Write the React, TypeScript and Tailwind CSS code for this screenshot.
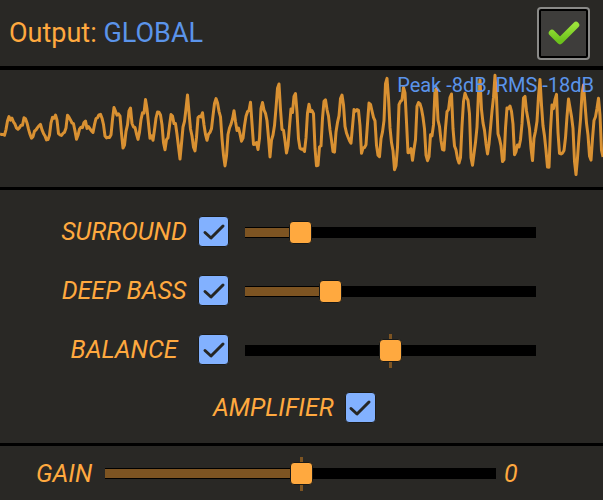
import React from "react";

function makeWave(): string {
  let s = 98765;
  const rnd = () => {
    s = (s * 1103515245 + 12345) % 2147483648;
    return s / 2147483648;
  };
  const pts: string[] = [];
  let phase = 0;
  let cycle = 0;
  let amp = 1;
  let offs = 0;
  const center = 57;
  for (let x = 0; x <= 604; x += 1.5) {
    const t = x / 603;
    const env = 12 + 30 * Math.min(1, Math.max(0, (t - 0.08) / 0.55));
    phase += 0.42 + rnd() * 0.4;
    const c = Math.floor(phase / Math.PI);
    if (c !== cycle) {
      cycle = c;
      amp = 0.55 + rnd() * 0.7;
      offs = (rnd() - 0.5) * 8;
    }
    const v = 0.8 * Math.sin(phase) + 0.2 * Math.sin(phase * 2.7 + 1) + (rnd() - 0.5) * 0.25;
    const y = center + offs + env * amp * v;
    pts.push(`${x.toFixed(1)},${y.toFixed(1)}`);
  }
  return pts.join(" ");
}

const WAVE = makeWave();

function Check() {
  return (
    <div className="w-[31px] h-[31px] rounded-[4px] bg-[#82b1ff] border border-[#1c1c1a] flex items-center justify-center shrink-0">
      <svg width="24" height="24" viewBox="0 0 24 24">
        <polyline points="3,12.5 9,18 21,6" fill="none" stroke="#262624" strokeWidth="3" strokeLinecap="round" strokeLinejoin="round" />
      </svg>
    </div>
  );
}

function Slider({ width, thumbLeft, fill, tick }: { width: number; thumbLeft: number; fill: boolean; tick: boolean }) {
  return (
    <div className="relative h-[24px] shrink-0" style={{ width }}>
      <div className="absolute left-0 right-0 top-[6px] h-[11px] bg-black" />
      {fill && <div className="absolute left-0 top-[7px] h-[9px] bg-[#7d5422]" style={{ width: thumbLeft + 11 }} />}
      {tick && <div className="absolute top-[-5px] h-[34px] w-[3px] bg-[#7d5422]" style={{ left: thumbLeft + 10 }} />}
      <div className="absolute top-0 w-[23px] h-[23px] rounded-[4px] bg-[#ffa93f] border border-[#1a1a18]" style={{ left: thumbLeft }} />
    </div>
  );
}

function Row({ label, thumbLeft, fill, tick }: { label: string; thumbLeft: number; fill: boolean; tick: boolean }) {
  return (
    <div className="flex items-center h-[31px]">
      <div className="ml-[54px] w-[140px] text-center italic text-[25px] text-[#ffa93f] whitespace-nowrap leading-none">{label}</div>
      <div className="ml-[4px]">
        <Check />
      </div>
      <div className="ml-[16px] mt-[3px]">
        <Slider width={291} thumbLeft={thumbLeft} fill={fill} tick={tick} />
      </div>
    </div>
  );
}

export default function App() {
  return (
    <div className="w-[603px] h-[500px] overflow-hidden bg-[#292825] flex flex-col" style={{ fontFamily: "Roboto, 'Noto Sans', sans-serif" }}>
      <div className="h-[70px] shrink-0 border-b-[4px] border-black flex items-center justify-between pl-[9px] pr-[13px]">
        <div className="text-[27px] leading-none mt-[1px]">
          <span className="text-[#ffa93f]">Output: </span>
          <span className="text-[#5b94ea]">GLOBAL</span>
        </div>
        <div className="w-[53px] h-[53px] rounded-[4px] border-2 border-[#8a8a88] bg-black p-[2px] mt-[1px]">
          <div className="w-full h-full bg-[#3e3d3b] relative">
            <svg width="45" height="45" viewBox="0 0 45 45" className="absolute left-0 top-0">
              <defs>
                <linearGradient id="g" x1="0" y1="0" x2="0" y2="1">
                  <stop offset="0" stopColor="#9be43a" />
                  <stop offset="1" stopColor="#6cc21c" />
                </linearGradient>
              </defs>
              <polyline points="11,22 19,30 35,14" fill="none" stroke="url(#g)" strokeWidth="6.5" strokeLinecap="round" strokeLinejoin="round" />
            </svg>
          </div>
        </div>
      </div>
      <div className="relative h-[120px] shrink-0 border-b-[3px] border-black">
        <svg width="603" height="117" viewBox="0 0 603 117" className="block">
          <polyline points={WAVE} fill="none" stroke="#d99132" strokeWidth="3" strokeLinejoin="round" />
        </svg>
        <div className="absolute right-[9px] top-[5px] text-[20px] text-[#5b94ea] leading-none">Peak -8dB, RMS -18dB</div>
      </div>
      <div className="h-[256px] shrink-0 border-b-[3px] border-black flex flex-col gap-[28px] pt-[26px]">
        <Row label="SURROUND" thumbLeft={44} fill tick={false} />
        <Row label="DEEP BASS" thumbLeft={74} fill tick={false} />
        <Row label="BALANCE" thumbLeft={134} fill={false} tick />
        <div className="flex items-center h-[31px] -mt-[1px]">
          <div className="ml-[213px] italic text-[25px] text-[#ffa93f] leading-none whitespace-nowrap">AMPLIFIER</div>
          <div className="ml-[11px]">
            <Check />
          </div>
        </div>
      </div>
      <div className="flex-1 flex items-center">
        <div className="ml-[36px] w-[60px] italic text-[25px] text-[#ffa93f] leading-none">GAIN</div>
        <div className="ml-[9px] mt-[2px]">
          <Slider width={391} thumbLeft={185} fill tick />
        </div>
        <div className="ml-[8px] italic text-[25px] text-[#ffa93f] leading-none">0</div>
      </div>
    </div>
  );
}
